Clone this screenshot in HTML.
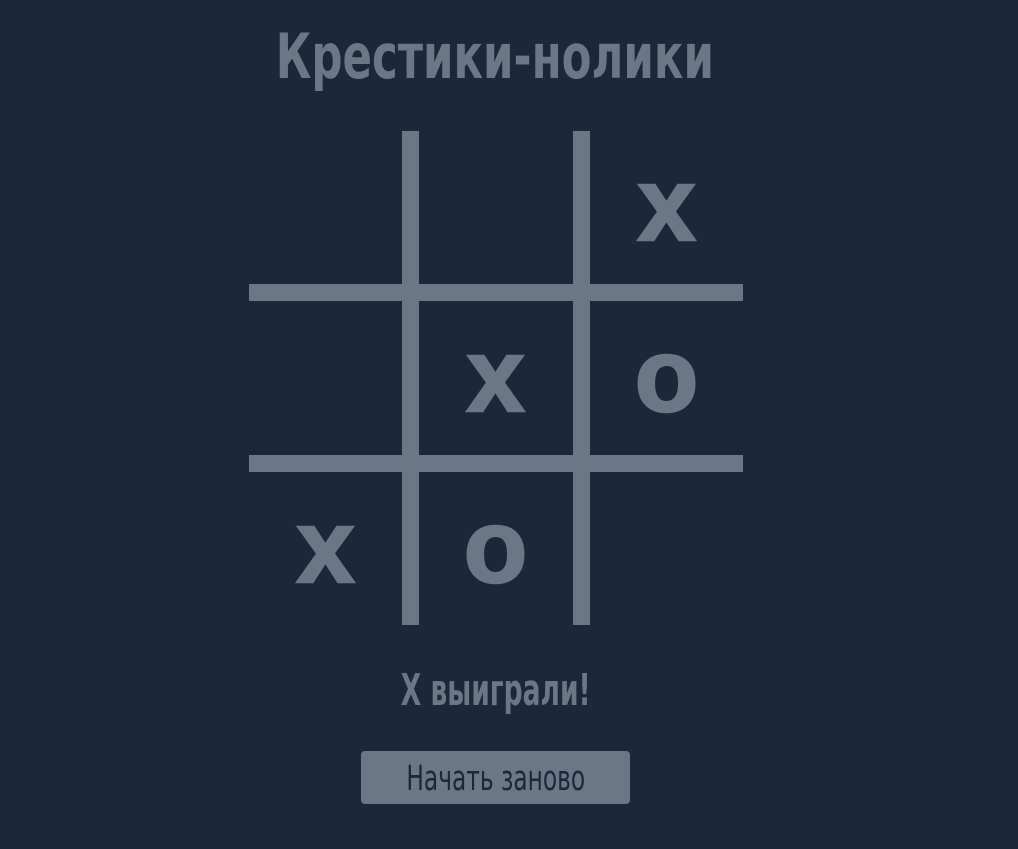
<!DOCTYPE html>
<html><head><meta charset="utf-8"><style>
html,body{margin:0;padding:0;background:#1b2839;width:1018px;height:849px;overflow:hidden;position:relative}
.c{color:#6b7787;font-family:"DejaVu Sans Condensed","Liberation Sans",sans-serif;font-weight:bold;position:absolute;white-space:nowrap}
.title{left:-14px;width:1018px;text-align:center;top:19px;font-size:62px;line-height:76px}
.title span{display:inline-block;transform:scaleX(0.78)}
.l{position:absolute;background:#6b7787}
.m{position:absolute;font-family:"Liberation Sans",sans-serif;font-weight:bold;font-size:104px;color:#6b7787;width:153px;text-align:center;line-height:100px;-webkit-text-stroke:2.5px #6b7787}
.st{left:-13px;width:1018px;text-align:center;top:664px;font-size:44px;line-height:54px}
.st span{display:inline-block;transform:scaleX(0.67)}
.btn{position:absolute;left:361px;top:751px;width:269px;height:53px;background:#6b7787;border-radius:4px;color:#1b2839;font-family:"DejaVu Sans Condensed","Liberation Sans",sans-serif;font-size:35px;line-height:56px;text-align:center;white-space:nowrap}
.btn span{display:inline-block;transform:scaleX(0.74)}
</style></head><body>
<div class="c title"><span>Крестики-нолики</span></div>
<div class="l" style="left:402px;top:131px;width:17px;height:494px"></div>
<div class="l" style="left:573px;top:131px;width:17px;height:494px"></div>
<div class="l" style="left:249px;top:284px;width:494px;height:17px"></div>
<div class="l" style="left:249px;top:455px;width:494px;height:17px"></div>
<div class="m" style="left:590px;top:155px">x</div>
<div class="m" style="left:419px;top:326px">x</div>
<div class="m" style="left:590px;top:326px">o</div>
<div class="m" style="left:249px;top:497px">x</div>
<div class="m" style="left:419px;top:497px">o</div>
<div class="c st"><span>X выиграли!</span></div>
<div class="btn"><span>Начать заново</span></div>
</body></html>
